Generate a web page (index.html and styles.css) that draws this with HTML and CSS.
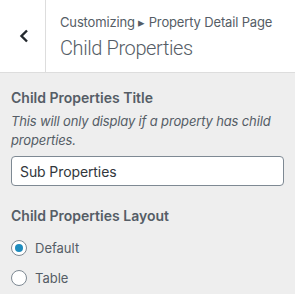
FILE: index.html
```html
<!DOCTYPE html>
<html lang="en">
<head>
    <meta charset="UTF-8">
    <title>Child Properties</title>
    <link rel="stylesheet" href="styles.css">
</head>
<body>
    <div class="section-header">
        <button class="back" aria-label="Back">
            <svg width="10" height="14" viewBox="0 0 10 14"><path d="M8 1.5 L2.5 7 L8 12.5" fill="none" stroke="#23282d" stroke-width="2.4"/></svg>
        </button>
        <div class="titles">
            <span class="crumb">Customizing &#9656; Property Detail Page</span>
            <h3>Child Properties</h3>
        </div>
    </div>

    <div class="controls">
        <div class="control">
            <label class="control-title" for="childTitle">Child Properties Title</label>
            <span class="description">This will only display if a property has child properties.</span>
            <input type="text" id="childTitle" value="Sub Properties">
        </div>
        <div class="control">
            <span class="control-title">Child Properties Layout</span>
            <label class="radio"><input type="radio" name="layout" checked> Default</label>
            <label class="radio"><input type="radio" name="layout"> Table</label>
        </div>
    </div>
</body>
</html>
```

FILE: styles.css
```css
body {
    margin: 0;
    background-color: #eee;
    font-family: Inter, "Liberation Sans", sans-serif;
    color: #555d66;
}
.section-header {
    display: flex;
    height: 72px;
    background-color: #fff;
    border-bottom: 1px solid #ddd;
}
.back {
    width: 46px;
    border: none;
    border-right: 1px solid #ddd;
    background: none;
    padding: 0 0 0 3px;
    display: flex;
    align-items: center;
    justify-content: center;
}
.titles {
    padding: 13px 0 0 14px;
}
.crumb {
    display: block;
    font-size: 13px;
    line-height: 18px;
    letter-spacing: -0.15px;
    color: #555d66;
}
.titles h3 {
    margin: 4px 0 0;
    font-family: Roboto, Inter, sans-serif;
    font-size: 20px;
    font-weight: 300;
    line-height: 26px;
    letter-spacing: -0.4px;
    color: #555d66;
}
.controls {
    padding: 15px 11px 0 11px;
}
.control {
    margin-bottom: 20px;
}
.control:last-child {
    margin-bottom: 0;
}
.control-title {
    display: block;
    font-size: 14px;
    font-weight: 600;
    line-height: 20px;
    color: #555d66;
    margin-bottom: 4px;
}
.description {
    display: block;
    font-size: 13px;
    font-style: italic;
    line-height: 19px;
    letter-spacing: -0.15px;
    color: #555d66;
    margin-bottom: 6px;
}
input[type="text"] {
    display: block;
    box-sizing: border-box;
    width: 100%;
    height: 30px;
    margin: 0;
    padding: 0 8px;
    border: 1px solid #7e8993;
    border-radius: 4px;
    background: #fff;
    font: 14px Inter, "Liberation Sans", sans-serif;
    letter-spacing: -0.1px;
    color: #32373c;
}
.radio {
    display: flex;
    align-items: center;
    font-size: 13px;
    line-height: 20px;
    color: #555d66;
    margin-top: 12px;
}
.radio + .radio {
    margin-top: 10px;
}
.radio input {
    appearance: none;
    box-sizing: border-box;
    width: 16px;
    height: 16px;
    margin: 0 8px 0 0;
    border: 1px solid #7e8993;
    border-radius: 50%;
    background: #fff;
    display: grid;
    place-content: center;
}
.radio input:checked::before {
    content: "";
    width: 8px;
    height: 8px;
    border-radius: 50%;
    background: #1e8cbe;
}
```
